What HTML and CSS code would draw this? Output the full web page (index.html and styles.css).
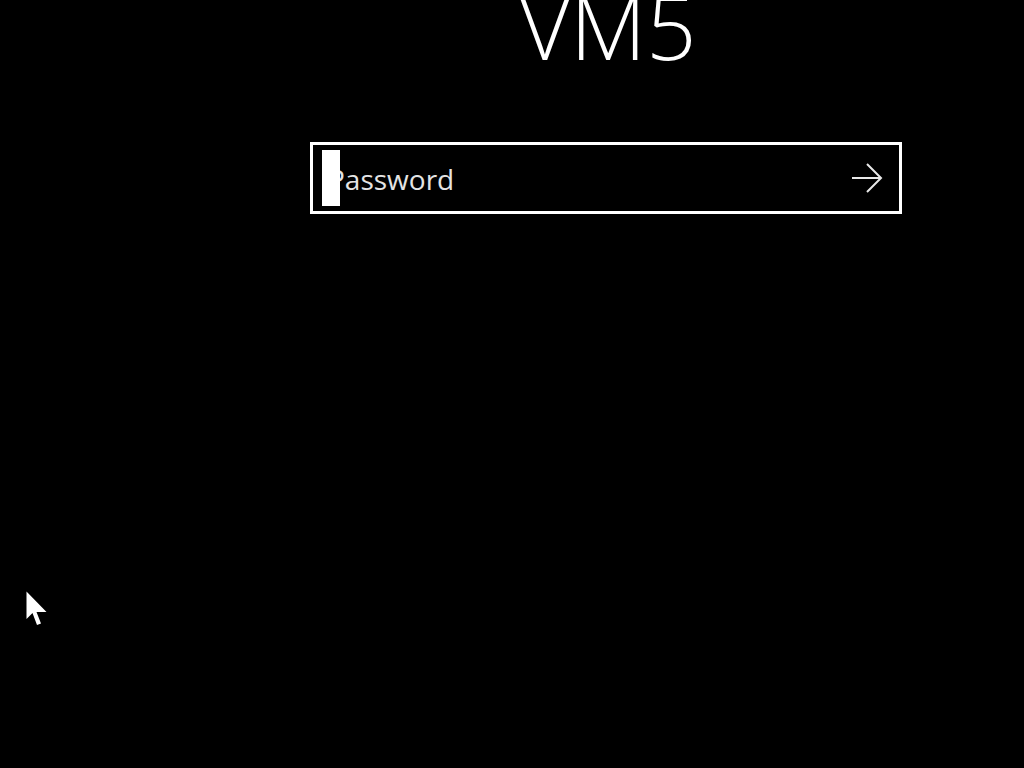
FILE: index.html
```html
<!DOCTYPE html>
<html>
<head>
<meta charset="utf-8">
<link rel="stylesheet" href="styles.css">
</head>
<body>
<main class="screen">
  <div class="panel">
    <h1 class="user">VM5</h1>
    <div class="pwbox">
      <span class="placeholder">Password</span>
      <span class="submit">
        <svg width="32" height="30" viewBox="0 0 32 30"><path d="M1 15 H30 M16 1 L30 15 L16 29" fill="none" stroke="#e8e8e8" stroke-width="2"/></svg>
      </span>
      <span class="caret"></span>
    </div>
  </div>
  <svg class="pointer" width="24" height="36" viewBox="0 0 24 36"><path d="M0.5 0.5 L0.5 28 L6.5 22 L11 34 L15 32.5 L10.5 21 L20.5 21 Z" fill="#fff"/></svg>
</main>
</body>
</html>
```
FILE: styles.css
```css
html, body {
  margin: 0;
  padding: 0;
  background: #000;
  height: 100%;
  overflow: hidden;
}
.screen {
  position: relative;
  width: 1024px;
  height: 768px;
  background: #000;
}
.panel {
  margin-left: 310px;
  width: 592px;
  display: flex;
  flex-direction: column;
}
.user {
  margin: -18px 0 0 4px;
  font-family: "Open Sans", sans-serif;
  font-weight: 300;
  font-size: 88px;
  line-height: 1;
  color: #fff;
  text-align: center;
  height: 72px;
}
.pwbox {
  margin-top: 88px;
  box-sizing: border-box;
  height: 72px;
  border: 3px solid #fff;
  display: flex;
  align-items: center;
  padding-left: 15px;
  position: relative;
}
.caret {
  position: absolute;
  left: 9px;
  top: 5px;
  width: 18px;
  height: 56px;
  background: #fff;
}
.placeholder {
  font-family: "Open Sans", sans-serif;
  font-size: 28px;
  color: #e4e4e4;
  flex: 1;
  padding-top: 2px;
}
.submit {
  width: 32px;
  height: 30px;
  margin-right: 16px;
  display: flex;
}
.pointer {
  position: absolute;
  left: 26px;
  top: 591px;
}
```
